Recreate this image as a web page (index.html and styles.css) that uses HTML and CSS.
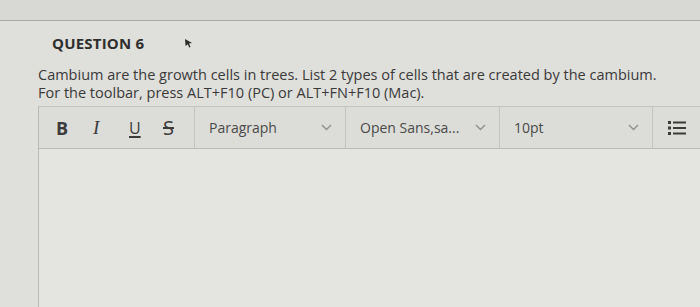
FILE: index.html
```html
<!DOCTYPE html>
<html lang="en">
<head>
    <meta charset="UTF-8">
    <title>Question 6</title>
    <link rel="stylesheet" href="styles.css">
</head>
<body>
    <div class="top-strip"></div>

    <div class="question">
        <div class="question-head">
            <h2>QUESTION 6</h2>
            <svg class="cursor" width="9" height="10" viewBox="0 0 9 10">
                <path d="M1 1 L8 5 L5 5.6 L6.5 9 L5.2 9.5 L3.8 6.2 L1.6 8 Z" fill="#2a2a2a"/>
            </svg>
        </div>

        <p class="prompt">Cambium are the growth cells in trees. List 2 types of cells that are created by the cambium.</p>
        <p class="hint">For the toolbar, press ALT+F10 (PC) or ALT+FN+F10 (Mac).</p>

        <div class="editor">
            <div class="toolbar">
                <div class="tool-group format">
                    <span class="btn bold">B</span>
                    <span class="btn italic">I</span>
                    <span class="btn underline">U</span>
                    <span class="btn strike">S</span>
                </div>
                <div class="tool-group select block">
                    <span>Paragraph</span>
                    <svg class="chev" width="11" height="7" viewBox="0 0 11 7"><path d="M1 1 L5.5 5.5 L10 1" fill="none" stroke="#8f8f8c" stroke-width="1.4"/></svg>
                </div>
                <div class="tool-group select font">
                    <span>Open Sans,sa...</span>
                    <svg class="chev" width="11" height="7" viewBox="0 0 11 7"><path d="M1 1 L5.5 5.5 L10 1" fill="none" stroke="#8f8f8c" stroke-width="1.4"/></svg>
                </div>
                <div class="tool-group select size">
                    <span>10pt</span>
                    <svg class="chev" width="11" height="7" viewBox="0 0 11 7"><path d="M1 1 L5.5 5.5 L10 1" fill="none" stroke="#8f8f8c" stroke-width="1.4"/></svg>
                </div>
                <div class="tool-group list">
                    <svg width="18" height="16" viewBox="0 0 18 16">
                        <rect x="0" y="1" width="3" height="3" fill="#3b3b3b"/>
                        <rect x="0" y="6.5" width="3" height="3" fill="#3b3b3b"/>
                        <rect x="0" y="12" width="3" height="3" fill="#3b3b3b"/>
                        <rect x="5" y="1.5" width="13" height="2" fill="#3b3b3b"/>
                        <rect x="5" y="7" width="13" height="2" fill="#3b3b3b"/>
                        <rect x="5" y="12.5" width="13" height="2" fill="#3b3b3b"/>
                    </svg>
                </div>
            </div>
            <div class="content"></div>
        </div>
    </div>
</body>
</html>
```

FILE: styles.css
```css
body {
    margin: 0;
    height: 307px;
    background-color: #dfdfdb;
    color: #353535;
    font-family: 'Open Sans', 'Liberation Sans', sans-serif;
    overflow: hidden;
}
.top-strip {
    height: 20px;
    background-color: #d8d8d4;
    border-bottom: 1px solid #a9a9a6;
}
.question {
    padding-left: 38px;
}
.question-head {
    display: flex;
    align-items: flex-start;
    padding: 12px 0 0 14px;
    height: 36px;
    box-sizing: border-box;
}
.question-head h2 {
    margin: 0;
    font-size: 15px;
    font-weight: 700;
    color: #2e2e2e;
    letter-spacing: 0.2px;
}
.cursor {
    margin: 5px 0 0 40px;
}
.prompt, .hint {
    margin: 0;
    font-size: 14.5px;
    line-height: 18px;
    color: #3a3a3a;
}
.prompt {
    margin-top: 9px;
}
.editor {
    margin-top: 4px;
    border-left: 1px solid #b9b9b5;
    background-color: #e3e3df;
}
.toolbar {
    display: flex;
    height: 41px;
    border-top: 1px solid #c4c4c0;
    border-bottom: 1px solid #b9b9b5;
    background-color: #dcdcd8;
}
.tool-group {
    display: flex;
    align-items: center;
    border-right: 1px solid #c4c4c0;
    font-size: 14px;
    color: #4a4a4a;
}
.format {
    width: 156px;
    padding-left: 17px;
    box-sizing: border-box;
}
.btn {
    display: inline-block;
    color: #3b3b3b;
}
.bold {
    font-weight: 700;
    font-size: 18px;
    width: 37px;
}
.italic {
    font-family: 'Liberation Serif', serif;
    font-style: italic;
    font-size: 19px;
    width: 36px;
}
.underline {
    text-decoration: underline;
    text-decoration-thickness: 1.5px;
    text-underline-offset: 2px;
    font-size: 16px;
    width: 34px;
}
.strike {
    text-decoration: line-through;
    text-decoration-thickness: 1.5px;
    font-size: 20px;
}
.select {
    justify-content: space-between;
    padding: 0 13px 0 14px;
    box-sizing: border-box;
}
.block {
    width: 151px;
}
.font {
    width: 154px;
}
.size {
    width: 153px;
}
.list {
    border-right: none;
    padding-left: 15px;
}
.content {
    height: 160px;
    background-color: #e4e4e0;
}
```
